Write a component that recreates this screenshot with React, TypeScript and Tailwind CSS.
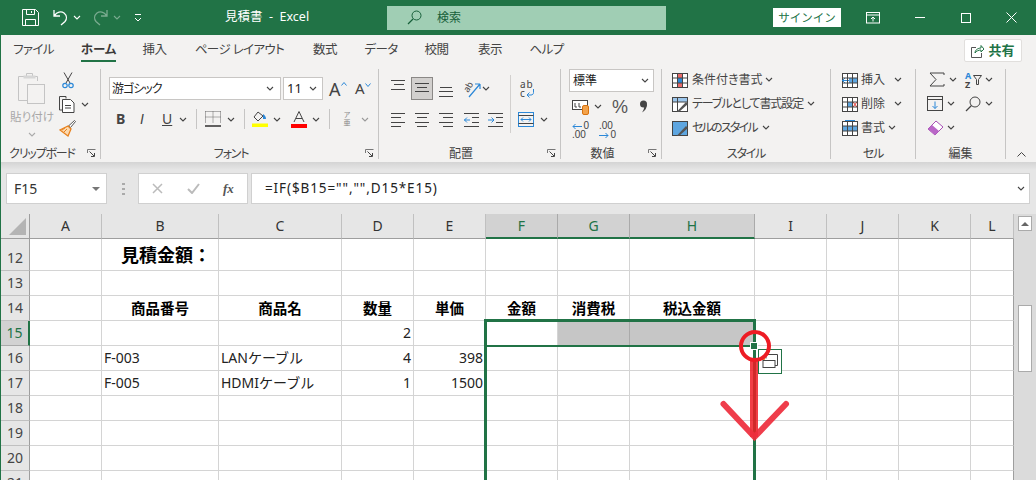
import type { ReactNode } from "react";

function Ico({ w = 16, h = 16, className = "", children }: { w?: number; h?: number; className?: string; children: ReactNode }) {
  return (
    <svg width={w} height={h} viewBox={`0 0 ${w} ${h}`} fill="none" className={`shrink-0 ${className}`}>
      {children}
    </svg>
  );
}

function Chev({ className = "", color = "#444" }: { className?: string; color?: string }) {
  return (
    <Ico w={8} h={5} className={className}>
      <path d="M1 1l3 3 3-3" stroke={color} strokeWidth="1.1" />
    </Ico>
  );
}

function Launcher() {
  return (
    <Ico w={9} h={9}>
      <path d="M.5 4V.5H8.500" stroke="#777" />
      <path d="M2.500 2.500L7 7M4 7.500h3.500V4" stroke="#444" />
    </Ico>
  );
}

// horizontal line stacks used by the alignment buttons
function Lines({ rows, w = 14, h = 21 }: { rows: [number, number, number][]; w?: number; h?: number }) {
  return (
    <Ico w={w} h={h}>
      {rows.map(([y, a, b]) => (
        <path key={`${y}${a}`} d={`M${a} ${y + 0.5}H${b}`} stroke="#444" />
      ))}
    </Ico>
  );
}

function GridIco({ children }: { children?: ReactNode }) {
  return (
    <Ico>
      <rect x=".5" y="1.500" width="15" height="14" fill="#fff" stroke="#444" />
      {children}
      <path d="M.5 6h15M.5 11h15M5.500 1.500v14M10.500 1.500v14" stroke="#444" />
    </Ico>
  );
}

function Group({ className, label, launcher, tight, children }: { className: string; label: string; launcher?: boolean; tight?: boolean; children: ReactNode }) {
  return (
    <div className={`flex shrink-0 ${className}`}>
      <div className="flex min-w-0 flex-1 flex-col">
        <div className="h-[79px]">{children}</div>
        <div className="flex h-[17px] items-center">
          <div className={`flex-1 whitespace-nowrap text-center text-[12px] leading-none text-[#444] ${tight ? "tracking-[-1.200px]" : ""}`}>{label}</div>
          {launcher && (
            <div className="flex w-[17px] justify-center">
              <Launcher />
            </div>
          )}
        </div>
      </div>
      <div className="my-[3px] w-px bg-[#c6c5c4]" />
    </div>
  );
}

function VSep({ className = "" }: { className?: string }) {
  return <div className={`h-[20px] w-px bg-[#c6c5c4] ${className}`} />;
}

function TitleBar() {
  return (
    <div className="flex h-[35px] shrink-0 items-center bg-[#217346] text-white">
      <Ico w={17} h={17} className="ml-[21px]">
        <path d="M.5.500h13l3 3v13H.5z" stroke="#fff" />
        <path d="M4.500.500v5h8v-5M3.500 16.500v-6h10v6M9.500 2v2" stroke="#fff" />
      </Ico>
      <Ico w={17} h={17} className="ml-[13px]">
        <path d="M2 1v6h6M2.500 6.500C5 3 9 2 12 4c3 2.500 3 6 1 8.500L9 16" stroke="#fff" strokeWidth="1.300" />
      </Ico>
      <Chev className="ml-[4px]" color="#fff" />
      <Ico w={17} h={17} className="ml-[11px] opacity-40">
        <path d="M15 1v6H9M14.500 6.500C12 3 8 2 5 4c-3 2.500-3 6-1 8.500L8 16" stroke="#fff" strokeWidth="1.300" />
      </Ico>
      <Chev className="ml-[4px] opacity-40" color="#fff" />
      <Ico w={8} h={9} className="ml-[13px]">
        <path d="M1 1.500h6M1 5l3 3 3-3" stroke="#fff" />
      </Ico>
      <div className="ml-[83px] w-[90px] whitespace-pre text-[12.500px] leading-none">見積書  -  Excel</div>
      <div className="ml-[72px] flex h-[24px] w-[279px] items-center bg-[#a0ceb4] text-[#17603a]">
        <Ico w={15} h={15} className="ml-[20px]">
          <circle cx="9.500" cy="5.500" r="4.500" stroke="#17603a" />
          <path d="M6 9l-5 5" stroke="#17603a" strokeWidth="1.200" />
        </Ico>
        <span className="ml-[15px] text-[12px] leading-none">検索</span>
      </div>
      <div className="ml-[107px] flex h-[19px] w-[68px] items-center justify-center bg-white text-[11.500px] leading-none text-[#217346]">サインイン</div>
      <Ico w={14} h={13} className="ml-[25px]">
        <rect x=".5" y="1.500" width="13" height="10.500" stroke="#fff" />
        <path d="M.5 4h13M7 10.500V6M5 8l2-2 2 2" stroke="#fff" />
      </Ico>
      <div className="ml-[35px] h-px w-[10px] bg-white" />
      <div className="ml-[36px] size-[10px] border border-white" />
      <Ico w={11} h={11} className="ml-[35px]">
        <path d="M.5.500l10 10M10.500.500l-10 10" stroke="#fff" />
      </Ico>
    </div>
  );
}

const tabs = [
  { t: "ファイル", c: "ml-[14px] w-[37px]" },
  { t: "ホーム", c: "ml-[29px] w-[35px]", on: true },
  { t: "挿入", c: "ml-[26px] w-[25px]" },
  { t: "ページ レイアウト", c: "ml-[30px] w-[85px]" },
  { t: "数式", c: "ml-[30px] w-[26px]" },
  { t: "データ", c: "ml-[27px] w-[32px]" },
  { t: "校閲", c: "ml-[27px] w-[25px]" },
  { t: "表示", c: "ml-[28px] w-[26px]" },
  { t: "ヘルプ", c: "ml-[27px] w-[33px]" },
];

function TabRow() {
  return (
    <div className="flex h-[31px] shrink-0 items-center bg-[#f3f2f1] [font-feature-settings:'palt']">
      {tabs.map((tab) => (
        <div
          key={tab.t}
          className={`relative flex h-full shrink-0 items-center justify-center whitespace-nowrap text-[12.500px] leading-none ${tab.c} ${
            tab.on ? "font-bold text-[#3b3a39]" : "tracking-[-0.600px] text-[#444]"
          }`}
        >
          {tab.t}
          {tab.on && <div className="absolute inset-x-0 bottom-[4px] h-[2px] bg-[#217346]" />}
        </div>
      ))}
      <div className="ml-[401px] flex h-[23px] w-[58px] items-center justify-center gap-[4px] rounded-[2px] border border-[#e1dfdd] bg-white text-[13px] font-bold leading-none text-[#217346]">
        <Ico w={13} h={14}>
          <path d="M5 3.500H.5v10h10V9" stroke="#555" />
          <path d="M4 9c0-3 3-5 6-5V1.500l3 3.500-3 3V6C7.500 6 5.500 7 4 9z" stroke="#217346" />
        </Ico>
        共有
      </div>
    </div>
  );
}

function Clipboard() {
  return (
    <Group className="w-[100px]" label="クリップボード" launcher tight>
      <div className="flex h-full">
        <div className="flex w-[52px] flex-col items-center pl-[10px]">
          <Ico w={28} h={32} className="mt-[6px]">
            <path d="M19.500 9V4.500h-5v-3h-6v3h-8v24h9" stroke="#c4c4c4" />
            <rect x="9.500" y="12.500" width="17" height="19" fill="#f3f2f1" stroke="#c4c4c4" />
            <rect x="5.500" y="3.500" width="12" height="3" fill="#d6d6d6" />
          </Ico>
          <div className="mt-[7px] whitespace-nowrap text-[11.500px] leading-none text-[#a8a8a8]">貼り付け</div>
          <Chev className="mt-[9px]" color="#aaa" />
        </div>
        <div className="flex flex-col pl-[6px]">
          <Ico w={12} h={17} className="ml-[3px] mt-[6px]">
            <path d="M2 .5l6 10.500M10 .5l-6 10.500" stroke="#444" />
            <circle cx="3" cy="13.500" r="2.200" stroke="#2b88d8" strokeWidth="1.200" />
            <circle cx="9" cy="13.500" r="2.200" stroke="#2b88d8" strokeWidth="1.200" />
          </Ico>
          <div className="mt-[7px] flex items-center">
            <Ico w={17} h={17}>
              <path d="M7 2.500V.5H.5V14H3" stroke="#444" />
              <path d="M3.500 3.500h8l3.500 3.500V16.500H3.500z" fill="#fff" stroke="#444" />
              <path d="M6 9.500h6M6 12h6" stroke="#444" />
            </Ico>
            <Chev className="ml-[5px]" />
          </div>
          <Ico w={17} h={17} className="mt-[7px]">
            <path d="M15.500.5l1 1-5 6-2-1.500z" fill="#fff" stroke="#555" />
            <path d="M9 6l3 3-3 7-8-6z" fill="#fbd9b0" stroke="#e8821e" strokeWidth="1.300" />
            <path d="M5 12l3-3M3 10l3-2" stroke="#e8821e" />
          </Ico>
        </div>
      </div>
    </Group>
  );
}

function FontGroup() {
  return (
    <Group className="w-[278px]" label="フォント" launcher tight>
      <div className="flex items-center pt-[11px]">
        <div className="ml-[8px] flex h-[23px] w-[172px] items-center justify-between border border-[#c8c6c4] bg-white pl-[2px] pr-[6px] text-[12px] leading-none tracking-[-1px] text-[#222]">
          游ゴシック
          <Chev />
        </div>
        <div className="ml-[2px] flex h-[23px] w-[40px] items-center justify-between border border-[#c8c6c4] bg-white pl-[3px] pr-[5px] text-[13px] leading-none text-[#222]">
          11
          <Chev />
        </div>
        <div className="ml-[6px] flex w-[18px] items-start text-[18px] leading-none text-[#444]">
          A
          <Ico w={6} h={4} className="mt-[2px]">
            <path d="M.5 3.500l2.500-3 2.500 3" stroke="#2b88d8" />
          </Ico>
        </div>
        <div className="ml-[8px] flex w-[16px] items-start text-[15px] leading-none text-[#444]">
          A
          <Ico w={6} h={4} className="mt-[2px]">
            <path d="M.5.500l2.500 3 2.500-3" stroke="#2b88d8" />
          </Ico>
        </div>
      </div>
      <div className="mt-[7px] flex h-[24px] items-center text-[#444]">
        <span className="ml-[15px] w-[12px] text-[14px] font-bold leading-none">B</span>
        <span className="ml-[12px] w-[12px] font-['Liberation_Sans'] text-[14px] italic leading-none">I</span>
        <span className="ml-[10px] w-[12px] text-[14px] leading-none underline">U</span>
        <Chev className="ml-[5px]" />
        <VSep className="ml-[9px]" />
        <Ico w={16} h={16} className="ml-[8px]">
          <path d="M.5 .5h15M.5 .5v11M15.500 .5v11M8 .5v11M.5 6h15" stroke="#666" strokeDasharray="1 1" />
          <path d="M0 15h16" stroke="#222" strokeWidth="1.400" />
        </Ico>
        <Chev className="ml-[6px]" />
        <VSep className="ml-[9px]" />
        <Ico w={16} h={16} className="ml-[7px]">
          <path d="M6 1L2 6l4 4 5-5z" stroke="#444" />
          <path d="M11 3c2 1 3 3 3 5h-3z" fill="#2b88d8" />
          <rect y="12.500" width="16" height="3.500" fill="#ffff00" />
        </Ico>
        <Chev className="ml-[5px]" />
        <Ico w={16} h={17} className="ml-[10px]">
          <path d="M3 11L8 .5 13 11M5 7.500h6" stroke="#444" />
          <rect y="13" width="16" height="4" fill="#ff0000" />
        </Ico>
        <Chev className="ml-[5px]" />
        <VSep className="ml-[9px]" />
        <div className="ml-[12px] flex w-[10px] flex-col items-center text-[7px] leading-[8px] text-[#888]">
          <span>ア</span>
          <span>亜</span>
        </div>
        <Chev className="ml-[9px]" color="#999" />
      </div>
    </Group>
  );
}

function AlignGroup() {
  const l4a: [number, number, number][] = [[4, 0, 14], [8, 0, 10], [13, 0, 14], [17, 0, 10]];
  const l4c: [number, number, number][] = [[4, 0, 14], [8, 2, 12], [13, 0, 14], [17, 2, 12]];
  const l4r: [number, number, number][] = [[4, 0, 14], [8, 4, 14], [13, 0, 14], [17, 4, 14]];
  return (
    <Group className="w-[182px]" label="配置" launcher>
      <div className="flex h-full">
        <div className="w-[131px] pt-[11px]">
          <div className="flex h-[23px] items-center">
            <div className="ml-[12px]">
              <Lines rows={[[3, 0, 14], [7, 3, 13], [12, 0, 14]]} h={23} />
            </div>
            <div className="ml-[6px] flex h-[23px] w-[22px] items-center justify-center border border-[#8a8886] bg-[#d2d0ce]">
              <Lines rows={[[5, 0, 14], [9, 2, 12], [13, 0, 14]]} />
            </div>
            <div className="ml-[6px]">
              <Lines rows={[[10, 1, 13], [14, 0, 14], [19, 0, 14]]} h={23} />
            </div>
            <div className="relative ml-[10px] size-[18px]">
              <Ico w={18} h={18}>
                <path d="M6 17L17 4M17 4h-5M17 4v5" stroke="#2b88d8" strokeWidth="1.200" />
              </Ico>
              <span className="absolute left-0 top-[2px] -rotate-[60deg] text-[9px] leading-[10px] text-[#444]">ab</span>
            </div>
            <Chev className="ml-[1px]" />
          </div>
          <div className="mt-[9px] flex h-[21px] items-center">
            <div className="ml-[12px]"><Lines rows={l4a} /></div>
            <div className="ml-[10px]"><Lines rows={l4c} /></div>
            <div className="ml-[10px]"><Lines rows={l4r} /></div>
            <Ico w={15} h={21} className="ml-[11px]">
              <path d="M0 4.500h15M8 8.500h7M8 13.500h7M0 17.500h15" stroke="#444" />
              <path d="M6 11H0M3 8.500L.5 11 3 13.500" stroke="#2b88d8" />
            </Ico>
            <Ico w={15} h={21} className="ml-[9px]">
              <path d="M0 4.500h15M8 8.500h7M8 13.500h7M0 17.500h15" stroke="#444" />
              <path d="M0 11h6M3.500 8.500L6 11l-2.500 2.500" stroke="#2b88d8" />
            </Ico>
          </div>
        </div>
        <div className="mt-[9px] h-[58px] w-px bg-[#d2d0ce]" />
        <div className="flex flex-col">
          <div className="ml-[9px] mt-[14px] h-[17px] w-[16px] text-[10px] leading-[8.500px] tracking-[1px] text-[#444]">
            <div>ab</div>
            <div className="flex items-center">
              c
              <Ico w={9} h={9}>
                <path d="M7.500 0v3.500c0 1.500-1 2.500-2.500 2.500H1M3.500 3.500L1 6l2.500 2.500" stroke="#2b88d8" />
              </Ico>
            </div>
          </div>
          <div className="ml-[7px] mt-[15px] flex items-center">
            <Ico w={16} h={15}>
              <rect x=".5" y=".5" width="15" height="14" stroke="#2b88d8" />
              <path d="M.5 3.500h15M.5 11.500h15" stroke="#444" />
              <path d="M3 7.500h10M5 5.500l-2 2 2 2M11 5.500l2 2-2 2" stroke="#2b88d8" />
            </Ico>
            <Chev className="ml-[6px]" />
          </div>
        </div>
      </div>
    </Group>
  );
}

function NumberGroup() {
  return (
    <Group className="w-[101px]" label="数値" launcher>
      <div className="ml-[8px] mt-[3px] flex h-[23px] w-[85px] items-center justify-between border border-[#c8c6c4] bg-white pl-[3px] pr-[4px] text-[12px] leading-none text-[#222]">
        標準
        <Chev />
      </div>
      <div className="mt-[3px] flex h-[23px] items-center">
        <Ico w={17} h={17} className="ml-[11px]">
          <rect x=".5" y="2.500" width="15" height="9" fill="#fff" stroke="#444" />
          <path d="M3 5v4h2M7 5v4h2" stroke="#444" />
          <rect x="10.500" y="7.500" width="6" height="9" rx="1.500" fill="#f3a24a" stroke="#d8720f" />
        </Ico>
        <Chev className="ml-[5px]" />
        <span className="ml-[10px] w-[17px] font-['Liberation_Sans'] text-[18px] leading-none text-[#555]">%</span>
        <Ico w={9} h={13} className="ml-[10px]">
          <circle cx="4.500" cy="4" r="3.500" fill="#444" />
          <path d="M8 4c0 4-2 7-5 8.500 1.500-2 2-3.500 2-5z" fill="#444" />
        </Ico>
      </div>
      <div className="mt-[4px] flex items-center">
        <div className="ml-[11px] flex w-[17px] flex-col font-['Liberation_Sans'] text-[10px] leading-[8px] text-[#444]">
          <div className="flex items-center justify-between">
            <Ico w={10} h={7}>
              <path d="M10 3.500H1M3.500 1L1 3.500 3.500 6" stroke="#2b88d8" />
            </Ico>
            <span>0</span>
          </div>
          <span className="mt-[1px]">.00</span>
        </div>
        <div className="ml-[10px] flex w-[17px] flex-col font-['Liberation_Sans'] text-[10px] leading-[8px] text-[#444]">
          <span>.00</span>
          <div className="mt-[1px] flex items-center justify-between">
            <Ico w={10} h={7}>
              <path d="M0 3.500h9M6.500 1L9 3.500 6.500 6" stroke="#2b88d8" />
            </Ico>
            <span>0</span>
          </div>
        </div>
      </div>
    </Group>
  );
}

const styleRows = [
  {
    t: "条件付き書式",
    c: "w-[69px]",
    icon: (
      <GridIco>
        <rect x="5" y="2" width="6" height="4" fill="#e86a6a" />
        <rect x="5" y="6" width="6" height="5" fill="#2b88d8" />
        <rect x="5" y="11" width="6" height="4" fill="#e86a6a" />
      </GridIco>
    ),
  },
  {
    t: "テーブルとして書式設定",
    c: "w-[111px] tracking-[-1.100px]",
    icon: (
      <Ico>
        <rect x=".5" y="1.500" width="15" height="14" fill="#fff" stroke="#444" />
        <rect x="1" y="2" width="14" height="4" fill="#9cc6ec" />
        <path d="M.5 6h15M5.500 1.500v14" stroke="#444" />
        <path d="M5 15.500l9-9.500 2 2-9 8z" fill="#555" />
      </Ico>
    ),
  },
  {
    t: "セルのスタイル",
    c: "w-[66px] tracking-[-1.800px]",
    icon: (
      <Ico>
        <rect x=".5" y="1.500" width="15" height="14" fill="#5ea6e0" stroke="#444" />
        <path d="M5 15.500l9-9.500 2 2-9 8z" fill="#555" />
      </Ico>
    ),
  },
];

function StyleGroup() {
  return (
    <Group className="w-[169px]" label="スタイル" tight>
      <div className="flex flex-col gap-[7px] pl-[10px] pt-[5px]">
        {styleRows.map((row) => (
          <div key={row.t} className="flex h-[17px] items-center gap-[4px]">
            {row.icon}
            <span className={`whitespace-nowrap text-[12px] leading-none text-[#444] ${row.c}`}>{row.t}</span>
            <Chev />
          </div>
        ))}
      </div>
    </Group>
  );
}

function CellsGroup() {
  return (
    <Group className="w-[85px]" label="セル" tight>
      <div className="flex flex-col gap-[7px] pl-[11px] pt-[5px] text-[12px] leading-none text-[#444]">
        <div className="flex h-[17px] items-center">
          <GridIco>
            <rect x="7" y="6" width="8" height="5" fill="#5ea6e0" />
            <path d="M7 8.500H0M3 6L.5 8.500 3 11" stroke="#2b88d8" />
          </GridIco>
          <span className="ml-[3px] w-[33px]">挿入</span>
          <Chev />
        </div>
        <div className="flex h-[17px] items-center">
          <GridIco>
            <rect x="5" y="6" width="6" height="5" fill="#5ea6e0" />
            <path d="M11 6l4 5M15 6l-4 5" stroke="#e53935" />
          </GridIco>
          <span className="ml-[3px] w-[33px]">削除</span>
          <Chev />
        </div>
        <div className="flex h-[17px] items-center">
          <GridIco>
            <rect x="1" y="6" width="14" height="5" fill="#5ea6e0" />
            <path d="M3 .5h10" stroke="#2b88d8" />
          </GridIco>
          <span className="ml-[3px] w-[27px]">書式</span>
          <Chev />
        </div>
      </div>
    </Group>
  );
}

function EditGroup() {
  return (
    <Group className="w-[90px]" label="編集">
      <div className="grid grid-cols-[38px_40px] gap-y-[7px] pl-[11px] pt-[5px]">
        <div className="flex h-[17px] items-center">
          <Ico w={16} h={15} className="ml-[2px]">
            <path d="M15 3V1H1l6 6.500L1 14h14v-2" stroke="#444" />
          </Ico>
          <Chev className="ml-[4px]" />
        </div>
        <div className="flex h-[17px] items-center">
          <div className="flex w-[8px] flex-col text-[9px] font-bold leading-[9px]">
            <span className="text-[#2b88d8]">A</span>
            <span className="text-[#444]">Z</span>
          </div>
          <Ico w={9} h={11}>
            <path d="M.5 1.500h8l-3 4v5h-2v-5z" stroke="#444" />
          </Ico>
          <Chev className="ml-[3px]" />
        </div>
        <div className="flex h-[17px] items-center">
          <Ico w={17} h={15}>
            <rect x=".5" y=".5" width="15" height="14" stroke="#444" />
            <path d="M.5 3.500h15" stroke="#444" />
            <path d="M8 5.500v7M5.500 10L8 12.500 10.500 10" stroke="#2b88d8" />
          </Ico>
          <Chev className="ml-[3px]" />
        </div>
        <div className="flex h-[17px] items-center">
          <Ico w={16} h={16}>
            <circle cx="10" cy="6" r="5" stroke="#444" />
            <path d="M6.500 9.500L1 15" stroke="#444" strokeWidth="1.300" />
          </Ico>
          <Chev className="ml-[4px]" />
        </div>
        <div className="flex h-[17px] items-center">
          <Ico w={17} h={16}>
            <path d="M1 9l8-8 7 6-8 8z" fill="#fff" stroke="#a74fb5" />
            <path d="M1 9l4-4 7 6-4 4z" fill="#b967c7" />
          </Ico>
          <Chev className="ml-[3px]" />
        </div>
      </div>
    </Group>
  );
}

function Ribbon() {
  return (
    <div className="relative flex h-[96px] shrink-0 items-stretch bg-[#f3f2f1] [font-feature-settings:'palt']">
      <Clipboard />
      <FontGroup />
      <AlignGroup />
      <NumberGroup />
      <StyleGroup />
      <CellsGroup />
      <EditGroup />
      <div className="flex flex-1 items-end justify-center pb-[5px]">
        <Ico w={9} h={5}>
          <path d="M.5 4.500l4-4 4 4" stroke="#444" />
        </Ico>
      </div>
    </div>
  );
}

function FormulaBar() {
  return (
    <div className="flex h-[52px] shrink-0 flex-col bg-[#e6e6e6]">
      <div className="h-[8px] bg-gradient-to-b from-[#d4d4d4] to-[#e6e6e6]" />
      <div className="mt-[3px] flex h-[31px] items-stretch">
        <div className="ml-[5px] flex w-[101px] items-center justify-between border border-[#d0d0d0] bg-white pl-[7px] pr-[6px] text-[14px] leading-none text-[#333]">
          F15
          <div className="size-0 border-x-[4px] border-t-[4px] border-x-transparent border-t-[#777]" />
        </div>
        <div className="ml-[15px] flex w-[3px] flex-col justify-center gap-[3px]">
          <div className="h-[2px] bg-[#aaa]" />
          <div className="h-[2px] bg-[#aaa]" />
          <div className="h-[2px] bg-[#aaa]" />
        </div>
        <div className="ml-[13px] flex w-[110px] items-center border border-[#d0d0d0] bg-white">
          <Ico w={11} h={11} className="ml-[13px]">
            <path d="M1 1l9 9M10 1l-9 9" stroke="#bbb" strokeWidth="1.500" />
          </Ico>
          <Ico w={13} h={11} className="ml-[24px]">
            <path d="M1 6l4 4 7-9" stroke="#bbb" strokeWidth="2" />
          </Ico>
          <span className="ml-[23px] font-['Liberation_Serif'] text-[13px] font-bold italic leading-none text-[#555]">fx</span>
        </div>
        <div className="ml-[3px] flex w-[779px] items-center justify-between border border-[#d0d0d0] bg-white pl-[13px] pr-[4px] text-[13.500px] leading-none tracking-[0.900px] text-[#222]">
          =IF($B15="","",D15*E15)
          <Chev />
        </div>
      </div>
    </div>
  );
}

const colHeads = [
  { n: "A", c: "" },
  { n: "B", c: "" },
  { n: "C", c: "" },
  { n: "D", c: "" },
  { n: "E", c: "" },
  { n: "F", c: "sel" },
  { n: "G", c: "sel" },
  { n: "H", c: "sel" },
  { n: "I", c: "" },
  { n: "J", c: "" },
  { n: "K", c: "" },
  { n: "L", c: "" },
];

type Cell = { t?: string; kind?: "title" | "head" | "num" | "text"; fill?: boolean };
const rows: { n: number; h: string; cells?: Record<string, Cell> }[] = [
  { n: 12, h: "h-[32px]", cells: { B: { t: "見積金額：", kind: "title" } } },
  { n: 13, h: "h-[25px]" },
  {
    n: 14,
    h: "h-[25px]",
    cells: {
      B: { t: "商品番号", kind: "head" },
      C: { t: "商品名", kind: "head" },
      D: { t: "数量", kind: "head" },
      E: { t: "単価", kind: "head" },
      F: { t: "金額", kind: "head" },
      G: { t: "消費税", kind: "head" },
      H: { t: "税込金額", kind: "head" },
    },
  },
  { n: 15, h: "h-[25px]", cells: { D: { t: "2", kind: "num" }, G: { fill: true }, H: { fill: true } } },
  {
    n: 16,
    h: "h-[25px]",
    cells: { B: { t: "F-003", kind: "text" }, C: { t: "LANケーブル", kind: "text" }, D: { t: "4", kind: "num" }, E: { t: "398", kind: "num" } },
  },
  {
    n: 17,
    h: "h-[25px]",
    cells: { B: { t: "F-005", kind: "text" }, C: { t: "HDMIケーブル", kind: "text" }, D: { t: "1", kind: "num" }, E: { t: "1500", kind: "num" } },
  },
  { n: 18, h: "h-[25px]" },
  { n: 19, h: "h-[25px]" },
  { n: 20, h: "h-[25px]" },
  { n: 21, h: "h-[25px]" },
];

const kindClass = {
  title: "justify-center pl-[12px] text-[18px] font-bold text-black",
  head: "justify-center text-[14.500px] font-bold text-black",
  num: "justify-end pr-[2px] text-[14px] text-[#222]",
  text: "pl-[2px] text-[14px] text-[#222]",
};

function Sheet() {
  return (
    <div className="relative flex min-h-0 flex-1 overflow-hidden bg-white">
      <div className="grid h-fit grid-cols-[29px_72px_117px_123px_72px_72px_72px_72px_125px_72px_72px_72px_43px]">
        <div className="flex h-[25px] items-end justify-end border-b border-r border-[#9e9e9e] bg-[#e6e6e6] pb-[3px] pr-[3px]">
          <div className="size-0 border-b-[17px] border-l-[17px] border-b-[#b4b4b4] border-l-transparent" />
        </div>
        {colHeads.map((c) => (
          <div
            key={c.n}
            className={`flex h-[25px] items-center justify-center text-[14px] leading-none ${
              c.c === "sel"
                ? "border-b-2 border-r border-b-[#217346] border-r-[#aaa] bg-[#d2d2d2] text-[#217346]"
                : "border-b border-r border-b-[#9e9e9e] border-r-[#c0c0c0] bg-[#e6e6e6] text-[#333]"
            }`}
          >
            {c.n}
          </div>
        ))}
        {rows.map((r) => (
          <div key={r.n} className="contents">
            <div
              className={`flex items-end justify-center pb-[2px] text-[14px] leading-[20px] ${r.h} ${
                r.n === 15
                  ? "border-b border-r-2 border-b-[#aaa] border-r-[#217346] bg-[#d2d2d2] text-[#217346]"
                  : "border-b border-r border-b-[#c0c0c0] border-r-[#9e9e9e] bg-[#e6e6e6] text-[#444]"
              }`}
            >
              {r.n}
            </div>
            {colHeads.map((c) => {
              const cell = r.cells?.[c.n];
              return (
                <div
                  key={c.n}
                  className={`flex items-center whitespace-nowrap leading-none ${r.h} ${cell?.kind ? kindClass[cell.kind] : ""} ${
                    cell?.fill ? "border-b border-r border-b-white border-r-[#aaa] bg-[#c6c6c6]" : "border-b border-r border-[#d4d4d4]"
                  } ${c.n === "L" ? "border-r-[#9e9e9e]" : ""}`}
                >
                  {cell?.t}
                </div>
              );
            })}
          </div>
        ))}
      </div>

      <div className="flex flex-1 flex-col items-center bg-[#dbdbdb] pt-[2px]">
        <div className="flex h-[15px] w-[14px] items-center justify-center border border-[#aaa] bg-white">
          <div className="size-0 border-x-[4px] border-b-[4px] border-x-transparent border-b-[#666]" />
        </div>
        <div className="mt-[74px] h-[67px] w-[14px] border border-[#aaa] bg-white" />
      </div>

      {/* selection and annotation lie over the grid */}
      <div className="absolute left-[483px] top-[105px] h-[200px] w-[272px] border-x-[3px] border-t-[3px] border-[#217346]" />
      <div className="absolute left-[485px] top-[131px] h-[2px] w-[265px] bg-[#217346]" />
      <div className="absolute left-[750px] top-[129px] size-[6px] bg-[#217346] outline outline-1 outline-white" />
      <div className="absolute left-[757px] top-[135px] flex h-[25px] w-[24px] items-center justify-center border border-[#217346] bg-white">
        <Ico w={16} h={15}>
          <path d="M4 4.500V.5h11.500v11H13" stroke="#444" />
          <rect x="1" y="6.500" width="12" height="7" stroke="#444" />
          <path d="M0 3h3v3H0z" fill="#f3a24a" />
        </Ico>
      </div>
      <svg width="80" height="120" viewBox="0 0 80 120" fill="none" className="absolute left-[714px] top-[114px]">
        <path d="M39 30v79" stroke="#ee1c25" strokeOpacity=".85" strokeWidth="8" />
        <path d="M8.500 76L39.500 109 71 76" stroke="#ee2c3c" strokeOpacity=".92" strokeWidth="6" strokeLinecap="round" />
        <circle cx="40" cy="18" r="14" stroke="#ed1c24" strokeWidth="4" />
      </svg>
    </div>
  );
}

export default function App() {
  return (
    <div className="flex h-[480px] w-[1036px] flex-col overflow-hidden border-l border-[#217346] font-['Noto_Sans','Noto_Sans_CJK_JP',sans-serif]">
      <TitleBar />
      <TabRow />
      <Ribbon />
      <FormulaBar />
      <Sheet />
    </div>
  );
}
